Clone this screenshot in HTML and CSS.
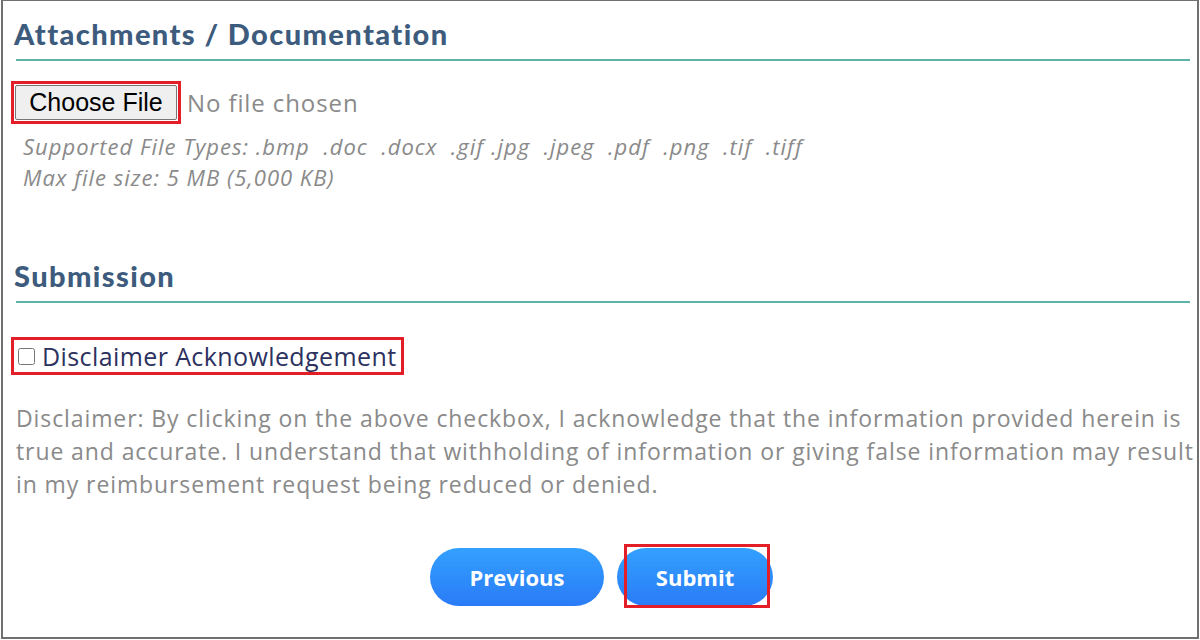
FILE: index.html
```html
<!DOCTYPE html>
<html lang="en">

<head>
    <meta charset="UTF-8">
    <meta name="viewport" content="width=device-width, initial-scale=1.0">
    <title>Attachments and Submission</title>
    <link rel="stylesheet" href="styles.css">
</head>

<body>

    <div class="frame">
        <h2 class="section-title">Attachments / Documentation</h2>

        <div class="file-row">
            <span class="mark mark-file">
                <button type="button" class="file-button">Choose File</button>
            </span>
            <span class="file-status">No file chosen</span>
        </div>

        <p class="file-note">
            Supported File Types: .bmp &nbsp;.doc &nbsp;.docx &nbsp;.gif .jpg &nbsp;.jpeg &nbsp;.pdf &nbsp;.png &nbsp;.tif &nbsp;.tiff<br>
            Max file size: 5 MB (5,000 KB)
        </p>

        <h2 class="section-title section-submit">Submission</h2>

        <label class="mark mark-check">
            <input type="checkbox" class="check">
            <span>Disclaimer Acknowledgement</span>
        </label>

        <p class="disclaimer">
            Disclaimer: By clicking on the above checkbox, I acknowledge that the information provided herein is<br>
            true and accurate. I understand that withholding of information or giving false information may result<br>
            in my reimbursement request being reduced or denied.
        </p>

        <div class="actions">
            <button type="button" class="pill pill-prev">Previous</button>
            <span class="mark-submit">
                <button type="button" class="pill pill-submit">Submit</button>
            </span>
        </div>
    </div>

</body>

</html>
```

FILE: styles.css
```css
body {
    margin: 0;
    padding: 0;
    background-color: #fff;
    font-family: 'Open Sans', 'Liberation Sans', sans-serif;
}

.frame {
    margin-left: 1px;
    width: 1198px;
    height: 639px;
    box-sizing: border-box;
    border: 2px solid #707070;
    border-top-width: 1px;
    padding: 0 7px 0 13px;
}

.section-title {
    margin: 0;
    padding-top: 16px;
    padding-bottom: 8px;
    text-indent: -2px;
    font-family: 'Lato', 'Open Sans', sans-serif;
    font-weight: 900;
    font-size: 29px;
    line-height: 34px;
    letter-spacing: 1.4px;
    color: #3d5b7c;
    border-bottom: 2px solid #5cb3aa;
}

.file-row {
    display: flex;
    align-items: center;
    margin-top: 23px;
    margin-left: -2px;
}

/* red annotation boxes */
.mark {
    outline: 3px solid #e41e26;
}

.mark-file {
    display: inline-flex;
    padding: 1px;
}

.file-button {
    font-family: 'Liberation Sans', Arial, sans-serif;
    font-size: 25px;
    color: #000;
    background-color: #efefef;
    border: 1px solid #767676;
    border-radius: 2px;
    width: 162px;
    height: 35px;
    padding: 0;
}

.file-status {
    margin-left: 9px;
    font-size: 24px;
    letter-spacing: 0.9px;
    color: #8a8a8a;
}

.file-note {
    margin: 10px 0 0 7px;
    font-style: italic;
    font-size: 22px;
    line-height: 31px;
    letter-spacing: 1px;
    color: #8a8a8a;
}

.section-submit {
    padding-top: 66px;
}

.mark-check {
    display: inline-flex;
    align-items: center;
    margin-top: 37px;
    margin-left: -2px;
    padding: 0 4px 0 2px;
    height: 32px;
    font-size: 25px;
    letter-spacing: 0.4px;
    color: #2c3160;
}

.check {
    width: 17px;
    height: 17px;
    margin: 0 7px 0 2px;
}

.disclaimer {
    margin: 30px 0 0;
    font-size: 23px;
    line-height: 33px;
    letter-spacing: 0.9px;
    white-space: nowrap;
    color: #8a8a8a;
}

.actions {
    display: flex;
    justify-content: center;
    align-items: center;
    gap: 13px;
    margin-top: 47px;
    padding-right: 3px;
}

.pill {
    height: 58px;
    border: none;
    border-radius: 29px;
    background: linear-gradient(#33a0ff, #2a7bf6);
    color: #fff;
    font-family: 'Open Sans', sans-serif;
    font-weight: 700;
    font-size: 22px;
    cursor: pointer;
}

.pill-prev {
    width: 174px;
}

.pill-submit {
    width: 156px;
    display: block;
}

.mark-submit {
    position: relative;
    display: inline-block;
}

/* annotation box drawn over the submit button */
.mark-submit::after {
    content: "";
    position: absolute;
    left: 7px;
    right: 3px;
    top: -4px;
    bottom: -2px;
    border: 3px solid #e41e26;
    pointer-events: none;
}
```
